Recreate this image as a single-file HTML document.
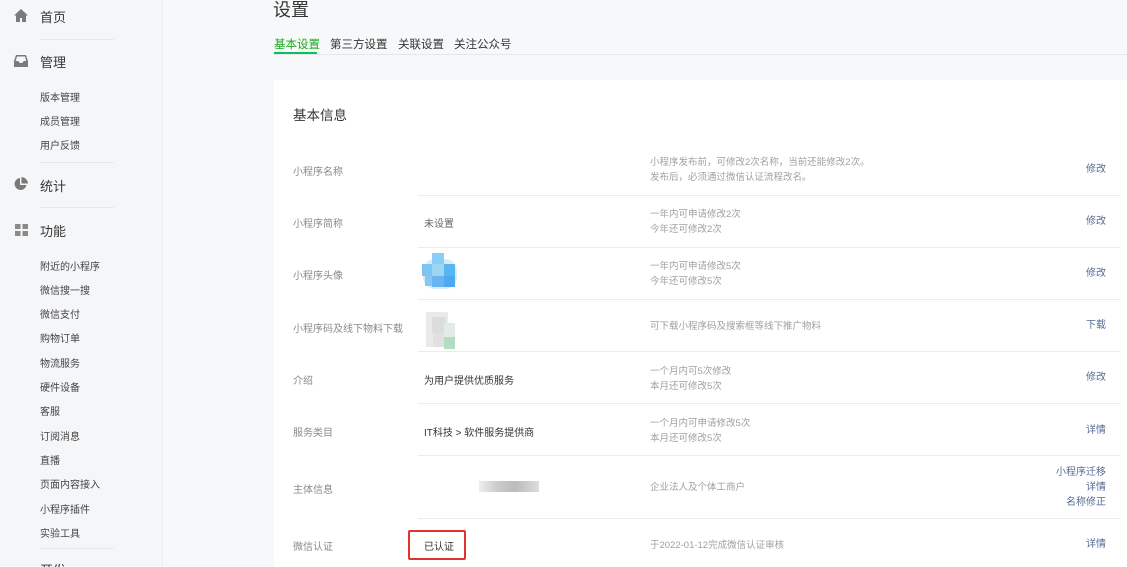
<!DOCTYPE html><html><head><meta charset="utf-8"><style>
*{margin:0;padding:0;box-sizing:border-box}
html{width:1127px;height:567px;overflow:hidden}
body{width:1127px;height:567px;overflow:hidden;background:#f6f8f9;font-family:"Liberation Sans","Noto Sans CJK SC",sans-serif;position:relative}
.a{position:absolute;white-space:nowrap}
.side{position:absolute;left:0;top:0;width:163px;height:567px;background:#f5f6f8;border-right:1px solid #eceef0}
.m{font-size:13px;color:#353535;left:40px}
.s{font-size:10px;color:#444;left:40px}
.dv{position:absolute;left:40px;width:74px;height:1px;background:#e6e8ea}
.lb{font-size:10px;color:#8a8a8a;left:293px}
.vl{font-size:10px;color:#333;left:424px}
.ds{font-size:9.5px;color:#a0a0a0;left:650px;line-height:15px}
.lk{font-size:10px;color:#576b95;right:21px;text-align:right;line-height:15px}
.ln{position:absolute;left:418px;width:702px;height:1px;background:#ececec}
</style></head><body>
<div class="side"></div>
<svg class="a" style="left:14px;top:9px" width="14" height="13" viewBox="0 0 14 13"><path d="M7 0L0 6.5h2V13h4V9h2v4h4V6.5h2z" fill="#7a7a7a"/></svg>
<div class="a m" style="top:7px">首页</div>
<div class="dv" style="top:39px"></div>
<svg class="a" style="left:14px;top:55px" width="14" height="12" viewBox="0 0 14 12"><path d="M2 0h10l2 6v6H0V6z" fill="#7a7a7a"/><path d="M3 1.5h8l1.3 4.5H9.5a2.5 2 0 0 1-5 0H1.7z" fill="#f5f6f8"/></svg>
<div class="a m" style="top:52px">管理</div>
<div class="a s" style="top:89px">版本管理</div>
<div class="a s" style="top:113px">成员管理</div>
<div class="a s" style="top:137px">用户反馈</div>
<div class="dv" style="top:162px"></div>
<svg class="a" style="left:14px;top:177px" width="14" height="14" viewBox="0 0 14 14"><path d="M6 1a6 6 0 1 0 6.5 7H6z" fill="#7a7a7a"/><path d="M7.5 0v6.5H14A7 7 0 0 0 7.5 0z" fill="#7a7a7a"/></svg>
<div class="a m" style="top:176px">统计</div>
<div class="dv" style="top:207px"></div>
<svg class="a" style="left:15px;top:224px" width="13" height="12" viewBox="0 0 13 12"><rect width="5.5" height="5" fill="#8a8a8a"/><rect x="7.5" width="5.5" height="5" fill="#8a8a8a"/><rect y="7" width="5.5" height="5" fill="#8a8a8a"/><rect x="7.5" y="7" width="5.5" height="5" fill="#8a8a8a"/></svg>
<div class="a m" style="top:221px">功能</div>
<div class="a s" style="top:258px">附近的小程序</div>
<div class="a s" style="top:282px">微信搜一搜</div>
<div class="a s" style="top:306px">微信支付</div>
<div class="a s" style="top:330px">购物订单</div>
<div class="a s" style="top:355px">物流服务</div>
<div class="a s" style="top:379px">硬件设备</div>
<div class="a s" style="top:403px">客服</div>
<div class="a s" style="top:428px">订阅消息</div>
<div class="a s" style="top:452px">直播</div>
<div class="a s" style="top:476px">页面内容接入</div>
<div class="a s" style="top:501px">小程序插件</div>
<div class="a s" style="top:525px">实验工具</div>
<div class="dv" style="top:548px"></div>
<div class="a m" style="top:560px;left:40px">开发</div>

<div class="a" style="left:273px;top:-4px;font-size:18px;color:#353535">设置</div>
<div class="a" style="left:274px;top:36px;font-size:11.5px;color:#1aad19">基本设置</div>
<div class="a" style="left:330px;top:36px;font-size:11.5px;color:#353535">第三方设置</div>
<div class="a" style="left:398px;top:36px;font-size:11.5px;color:#353535">关联设置</div>
<div class="a" style="left:454px;top:36px;font-size:11.5px;color:#353535">关注公众号</div>
<div class="a" style="left:274px;top:54px;width:853px;height:1px;background:#e7e7e7"></div>
<div class="a" style="left:274px;top:52px;width:43px;height:2px;background:#07c160"></div>

<div class="a" style="left:274px;top:80px;width:853px;height:487px;background:#fff"></div>
<div class="a" style="left:293px;top:104px;font-size:13.5px;color:#353535">基本信息</div>

<div class="a lb" style="top:163px">小程序名称</div>
<div class="a ds" style="top:155px">小程序发布前，可修改2次名称，当前还能修改2次。<br>发布后，必须通过微信认证流程改名。</div>
<div class="a lk" style="top:162px">修改</div>
<div class="ln" style="top:195px"></div>

<div class="a lb" style="top:215px">小程序简称</div>
<div class="a vl" style="top:215px;color:#666">未设置</div>
<div class="a ds" style="top:207px">一年内可申请修改2次<br>今年还可修改2次</div>
<div class="a lk" style="top:214px">修改</div>
<div class="ln" style="top:247px"></div>

<div class="a lb" style="top:267px">小程序头像</div>
<svg class="a" style="left:420px;top:251px" width="40" height="42" viewBox="0 0 40 42"><rect x="3" y="8" width="34" height="30" rx="12" fill="#d6ecfa"/><rect x="12" y="2" width="12" height="11" fill="#87cff5"/><rect x="2" y="13" width="10" height="12" fill="#7cc4f2"/><rect x="12" y="13" width="12" height="12" fill="#9ed5f2"/><rect x="24" y="13" width="11" height="12" fill="#57b6ee"/><rect x="5" y="25" width="7" height="10" fill="#88c7f3"/><rect x="12" y="25" width="12" height="11" fill="#6ab5ee"/><rect x="24" y="25" width="11" height="11" fill="#4ea9f0"/></svg>
<div class="a ds" style="top:259px">一年内可申请修改5次<br>今年还可修改5次</div>
<div class="a lk" style="top:266px">修改</div>
<div class="ln" style="top:299px"></div>

<div class="a lb" style="top:320px">小程序码及线下物料下载</div>
<svg class="a" style="left:423px;top:309px" width="36" height="42" viewBox="0 0 36 42"><rect x="3" y="3" width="22" height="35" fill="#e9e9e9"/><rect x="9" y="8" width="14" height="16" fill="#dcdcdc"/><rect x="21" y="14" width="11" height="14" fill="#e3ebe6"/><rect x="21" y="28" width="11" height="12" fill="#b3dcc2"/><rect x="10" y="24" width="11" height="14" fill="#e0e0e0"/></svg>
<div class="a ds" style="top:319px">可下载小程序码及搜索框等线下推广物料</div>
<div class="a lk" style="top:318px">下载</div>
<div class="ln" style="top:351px"></div>

<div class="a lb" style="top:372px">介绍</div>
<div class="a vl" style="top:372px">为用户提供优质服务</div>
<div class="a ds" style="top:364px">一个月内可5次修改<br>本月还可修改5次</div>
<div class="a lk" style="top:370px">修改</div>
<div class="ln" style="top:403px"></div>

<div class="a lb" style="top:424px">服务类目</div>
<div class="a vl" style="top:424px">IT科技 &gt; 软件服务提供商</div>
<div class="a ds" style="top:416px">一个月内可申请修改5次<br>本月还可修改5次</div>
<div class="a lk" style="top:423px">详情</div>
<div class="ln" style="top:455px"></div>

<div class="a lb" style="top:481px">主体信息</div>
<div class="a" style="left:479px;top:481px;width:60px;height:11px;background:linear-gradient(90deg,#eee,#ccc 30%,#bbb 60%,#ddd)"></div>
<div class="a ds" style="top:480px">企业法人及个体工商户</div>
<div class="a lk" style="top:465px">小程序迁移<br>详情<br>名称修正</div>
<div class="ln" style="top:518px"></div>

<div class="a lb" style="top:538px">微信认证</div>
<div class="a" style="left:408px;top:530px;width:58px;height:30px;border:2px solid #e0332f;border-radius:2px"></div>
<div class="a vl" style="top:538px;left:424px">已认证</div>
<div class="a ds" style="top:538px">于2022-01-12完成微信认证审核</div>
<div class="a lk" style="top:537px">详情</div>
</body></html>
